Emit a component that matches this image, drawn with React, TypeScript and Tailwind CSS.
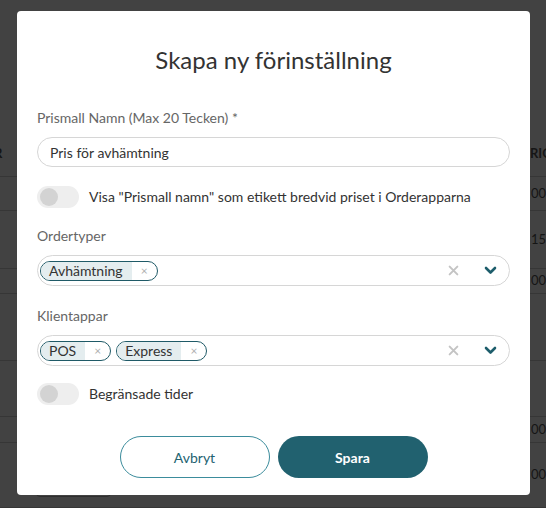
import { useState } from 'react'

const rows = [
  { h: 'h-[34px]', right: '00-00', left: null },
  { h: 'h-[58px]', right: '15-00', left: null },
  { h: 'h-[25px]', right: '00-00', left: null },
  { h: 'h-[67px]', right: '', left: null },
  { h: 'h-[56px]', right: '', left: null },
  { h: 'h-[26px]', right: '00-00', left: null },
  { h: 'h-[65px]', right: '00-00', left: 'UNKNOWN' },
]

function Toggle({ label }: { label: string }) {
  const [on, setOn] = useState(false)
  return (
    <div className="flex items-center gap-[10px]">
      <button
        onClick={() => setOn(!on)}
        className={`relative w-[42px] h-[22px] rounded-full ${on ? 'bg-[#21616f]' : 'bg-[#eeeeee]'}`}
      >
        <span
          className={`absolute top-[2px] w-[18px] h-[18px] rounded-full ${on ? 'left-[22px] bg-white' : 'left-[3px] bg-[#d3d3d3]'}`}
        />
      </button>
      <span className="text-[14px] leading-[20px] text-[#333]">{label}</span>
    </div>
  )
}

function Tag({ label }: { label: string }) {
  return (
    <span className="flex items-stretch h-[20px] rounded-full border border-[#1f5a67] overflow-hidden">
      <span className="flex items-center bg-[#e4edef] pl-[8px] pr-[9px] text-[14px] leading-[18px] text-[#333]">{label}</span>
      <span className="flex items-center px-[9px] text-[12px] leading-[18px] text-[#b0b0b0]">×</span>
    </span>
  )
}

function MultiSelect({ tags }: { tags: string[] }) {
  return (
    <div className="flex items-center h-[31px] rounded-full border border-[#d6d6d6] pl-[2px] pr-[12px]">
      <div className="flex items-center gap-[5px] flex-1">
        {tags.map((t) => (
          <Tag key={t} label={t} />
        ))}
      </div>
      <svg width="11" height="11" viewBox="0 0 10 10" className="mr-[25px]">
        <path d="M1.5 1.5L8.5 8.5M8.5 1.5L1.5 8.5" stroke="#c4c4c4" strokeWidth="1.8" strokeLinecap="round" />
      </svg>
      <svg width="13" height="9" viewBox="0 0 13 9">
        <path d="M2 2l4.5 4.5L11 2" stroke="#1d5d6b" strokeWidth="2.6" fill="none" strokeLinecap="round" strokeLinejoin="round" />
      </svg>
    </div>
  )
}

export default function App() {
  return (
    <div className="relative h-[508px] overflow-hidden bg-[#424242] font-['Lato','Open_Sans',sans-serif]">
      {/* table behind the overlay */}
      <div className="flex flex-col text-[13px] text-[#151515]">
        <div className="h-[177px] flex items-end justify-between pb-[13px] border-b border-[#363636] font-bold">
          <span className="-ml-[6px]">R</span>
          <span className="w-[16px] overflow-hidden whitespace-nowrap">RIORITY</span>
        </div>
        {rows.map((r, i) => (
          <div key={i} className={`${r.h} flex items-center justify-between border-b border-[#363636]`}>
            <span className="pl-[36px]">
              {r.left && (
                <span className="mt-[26px] block rounded-[4px] border border-[#2e2e2e] px-[6px] text-[11px] font-bold">
                  {r.left}
                </span>
              )}
            </span>
            <span className="w-[15px] overflow-hidden whitespace-nowrap">{r.right}</span>
          </div>
        ))}
      </div>

      {/* modal */}
      <div className="absolute left-[17px] top-[11px] w-[513px] h-[484px] rounded-[4px] bg-white px-[20px] pt-[33px] flex flex-col">
        <h2 className="text-center text-[24px] leading-[32px] text-[#333]">Skapa ny förinställning</h2>

        <label className="mt-[32px] text-[14px] leading-[20px] text-[#666]">Prismall Namn (Max 20 Tecken) *</label>
        <div className="mt-[9px] h-[30px] flex items-center rounded-full border border-[#d6d6d6] px-[12px] text-[14px] text-[#333]">
          Pris för avhämtning
        </div>

        <div className="mt-[19px]">
          <Toggle label={'Visa "Prismall namn" som etikett bredvid priset i Orderapparna'} />
        </div>

        <label className="mt-[18px] text-[14px] leading-[20px] text-[#666]">Ordertyper</label>
        <div className="mt-[9px]">
          <MultiSelect tags={['Avhämtning']} />
        </div>

        <label className="mt-[20px] text-[14px] leading-[20px] text-[#666]">Klientappar</label>
        <div className="mt-[9px]">
          <MultiSelect tags={['POS', 'Express']} />
        </div>

        <div className="mt-[17px]">
          <Toggle label="Begränsade tider" />
        </div>

        <div className="mt-[31px] flex justify-center gap-[8px]">
          <button className="w-[150px] h-[42px] rounded-full border border-[#3b8c9c] bg-white text-[14px] text-[#236271]">
            Avbryt
          </button>
          <button className="w-[150px] h-[42px] rounded-full bg-[#21616f] text-[14px] font-bold text-white">
            Spara
          </button>
        </div>
      </div>
    </div>
  )
}
